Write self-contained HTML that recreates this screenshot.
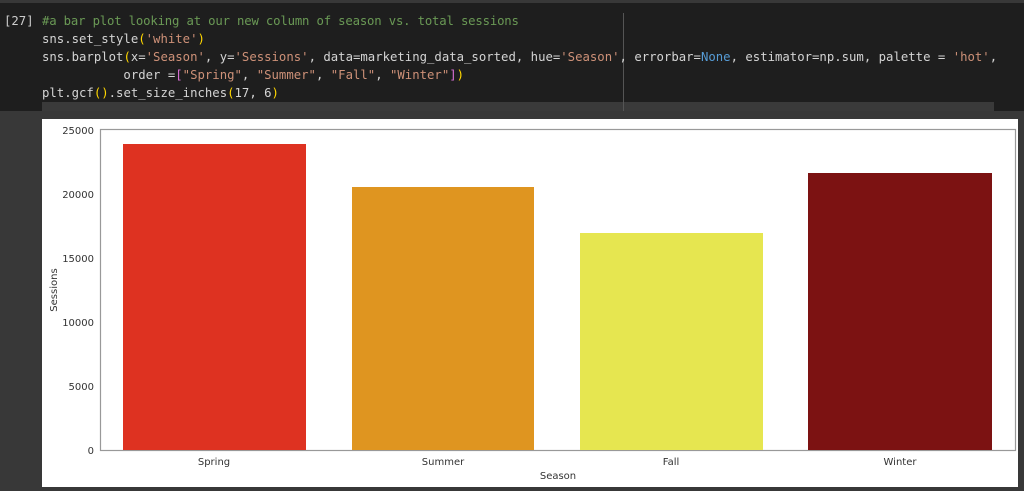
<!DOCTYPE html><html><head><style>
body{margin:0;width:1024px;height:491px;background:#383838;position:relative;overflow:hidden;font-family:"DejaVu Sans","Liberation Sans",sans-serif}
.cell{position:absolute;left:0;top:3px;width:1024px;height:108px;background:#1e1e1e}
.code{position:absolute;left:42px;top:12px;font-family:"DejaVu Sans Mono","Liberation Mono",monospace;font-size:12.3px;line-height:18px;color:#d4d4d4;white-space:pre}
.n{position:absolute;left:4px;top:12px;font-family:"DejaVu Sans Mono",monospace;font-size:12.3px;line-height:18px;color:#cccccc}
.c{color:#6a9955;letter-spacing:-0.18px}.s{color:#ce9178}.y{color:#ffd700}.p{color:#da70d6}.b{color:#569cd6}
</style></head><body>
<div class="cell"></div>
<div style="position:absolute;left:42px;top:102px;width:952px;height:9px;background:#3a3a3a"></div>
<div style="position:absolute;left:623px;top:13px;width:1px;height:98px;background:#555"></div>
<div class="n">[27]</div>
<div class="code"><span class="c">#a bar plot looking at our new column of season vs. total sessions</span>
sns.set_style<span class="y">(</span><span class="s">'white'</span><span class="y">)</span>
sns.barplot<span class="y">(</span>x=<span class="s">'Season'</span>, y=<span class="s">'Sessions'</span>, data=marketing_data_sorted, hue=<span class="s">'Season'</span>, errorbar=<span class="b">None</span>, estimator=np.sum, palette = <span class="s">'hot'</span>,
           order =<span class="p">[</span><span class="s">"Spring"</span>, <span class="s">"Summer"</span>, <span class="s">"Fall"</span>, <span class="s">"Winter"</span><span class="p">]</span><span class="y">)</span>
plt.gcf<span class="y">()</span>.set_size_inches<span class="y">(</span>17, 6<span class="y">)</span></div>
<svg style="position:absolute;left:42px;top:119px" width="976" height="368" viewBox="42 119 976 368">
<rect x="42" y="119" width="976" height="368" fill="#fff"/>
<rect x="100.5" y="129.5" width="915" height="321" fill="none" stroke="#999" stroke-width="1.2"/>
<rect x="123" y="144" width="183" height="306" fill="#de3221"/>
<rect x="352" y="187" width="182" height="263" fill="#df9520"/>
<rect x="580" y="233" width="183" height="217" fill="#e6e650"/>
<rect x="808" y="173" width="184" height="277" fill="#7c1212"/>
<g font-size="10" fill="#333" text-anchor="end" font-family="DejaVu Sans,sans-serif">
<text x="94" y="134">25000</text><text x="94" y="198">20000</text><text x="94" y="262">15000</text><text x="94" y="326">10000</text><text x="94" y="390">5000</text><text x="94" y="454">0</text></g>
<g font-size="10" fill="#333" text-anchor="middle" font-family="DejaVu Sans,sans-serif">
<text x="214" y="465">Spring</text><text x="443" y="465">Summer</text><text x="671" y="465">Fall</text><text x="900" y="465">Winter</text>
<text x="558" y="479">Season</text>
<text transform="translate(57,290) rotate(-90)">Sessions</text></g>
</svg>
</body></html>
